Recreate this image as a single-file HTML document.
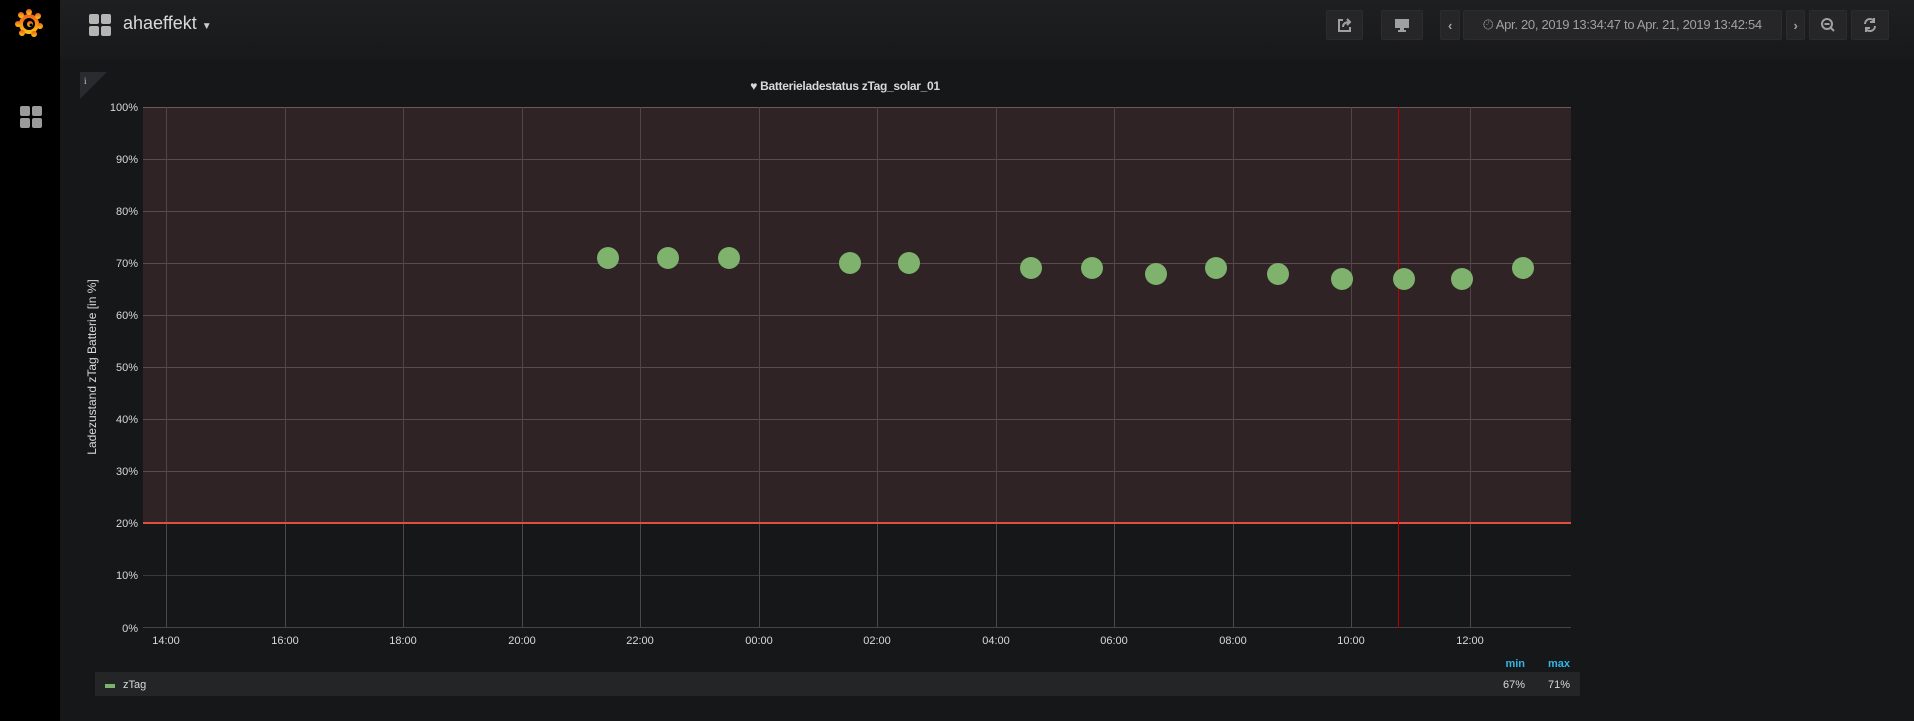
<!DOCTYPE html>
<html><head><meta charset="utf-8"><style>
body{margin:0;width:1914px;height:721px;overflow:hidden;background:#161719;font-family:"Liberation Sans",sans-serif;position:relative}
.side{position:absolute;left:0;top:0;width:60px;height:721px;background:#000}
.top{position:absolute;left:60px;top:0;right:0;height:60px;background:linear-gradient(#1e1f21,#18191b)}
.btn{position:absolute;top:10px;height:30px;background:#262628;border:1px solid #2c2c2e;box-sizing:border-box;border-radius:2px;color:#9fa0a2;font-size:13px;display:flex;align-items:center;justify-content:center;letter-spacing:-0.3px}
</style></head><body>
<div class="side">
<svg width="60" height="50" style="position:absolute;left:0;top:0"><defs><linearGradient id="g" x1="0" y1="1" x2="0" y2="0"><stop offset="0" stop-color="#fbca0a"/><stop offset="1" stop-color="#f05a28"/></linearGradient></defs>
<g fill="url(#g)"><circle cx="29" cy="24" r="10"/><circle cx="29" cy="12" r="3"/><circle cx="38" cy="16" r="3"/><circle cx="40" cy="26" r="3"/><circle cx="34" cy="34" r="3"/><circle cx="22" cy="33" r="3"/><circle cx="18" cy="24" r="3"/><circle cx="21" cy="15" r="3"/></g>
<circle cx="29" cy="24" r="6" fill="#000"/><circle cx="30" cy="24" r="3" fill="url(#g)"/><circle cx="31" cy="25" r="1.5" fill="#000"/></svg>
<div style="position:absolute;left:20px;top:106px;width:22px;height:22px">
<div style="position:absolute;left:0;top:0;width:10px;height:10px;background:#9b9b9b;border-radius:2px"></div>
<div style="position:absolute;left:12px;top:0;width:10px;height:10px;background:#9b9b9b;border-radius:2px"></div>
<div style="position:absolute;left:0;top:12px;width:10px;height:10px;background:#9b9b9b;border-radius:2px"></div>
<div style="position:absolute;left:12px;top:12px;width:10px;height:10px;background:#9b9b9b;border-radius:2px"></div></div>
</div>
<div class="top"></div>
<div style="position:absolute;left:89px;top:14px;width:22px;height:22px">
<div style="position:absolute;left:0;top:0;width:10px;height:10px;background:#b5b5b5;border-radius:2px"></div>
<div style="position:absolute;left:12px;top:0;width:10px;height:10px;background:#b5b5b5;border-radius:2px"></div>
<div style="position:absolute;left:0;top:12px;width:10px;height:10px;background:#b5b5b5;border-radius:2px"></div>
<div style="position:absolute;left:12px;top:12px;width:10px;height:10px;background:#b5b5b5;border-radius:2px"></div></div>
<div style="position:absolute;left:123px;top:13px;color:#d8d9da;font-size:18px">ahaeffekt <span style="font-size:10px;color:#ccc">▼</span></div>
<div class="btn" style="left:1326px;width:37px"><svg width="16" height="16" viewBox="0 0 16 16" fill="none" stroke="#9fa0a2" stroke-width="2"><path d="M6 3H2v11h11v-4"/><path d="M6 10c0-4 3-5 7-5M10 2l3 3-3 3"/></svg></div>
<div class="btn" style="left:1381px;width:42px"><svg width="18" height="16"><rect x="2" y="2" width="14" height="9" fill="#9fa0a2"/><rect x="7" y="11" width="4" height="3" fill="#9fa0a2"/><rect x="5" y="13" width="8" height="2" fill="#9fa0a2"/></svg></div>
<div class="btn" style="left:1440px;width:20px;font-weight:bold">‹</div>
<div class="btn" style="left:1463px;width:319px">🕘&#xFE0E; Apr. 20, 2019 13:34:47 to Apr. 21, 2019 13:42:54</div>
<div class="btn" style="left:1786px;width:19px;font-weight:bold">›</div>
<div class="btn" style="left:1809px;width:38px"><svg width="16" height="16" fill="none" stroke="#9fa0a2" stroke-width="2"><circle cx="7" cy="7" r="5"/><path d="M4.5 7h5M11 11l3 3"/></svg></div>
<div class="btn" style="left:1851px;width:38px"><svg width="16" height="16" fill="none" stroke="#9fa0a2" stroke-width="2"><path d="M3 7a5 5 0 0 1 9-3M13 9a5 5 0 0 1-9 3"/><path d="M12 1v4h-4M4 15v-4h4"/></svg></div>
<svg width="27" height="27" style="position:absolute;left:80px;top:72px"><path d="M0 0H27L0 27Z" fill="#2a2b2e"/><text x="4" y="12" fill="#ccc" font-size="9" font-family="Liberation Serif">i</text></svg>
<div style="position:absolute;left:0;width:1690px;top:79px;text-align:center;color:#d8d9da;font-size:12px;font-weight:bold;letter-spacing:-0.3px">♥ Batterieladestatus zTag_solar_01</div>
<svg width="1914" height="721" style="position:absolute;left:0;top:0">
<rect x="143" y="107" width="1428" height="416" fill="#2f2325"/>
<g stroke-width="1">
<line x1="143" x2="1571" y1="107.5" y2="107.5" stroke="#6a5a5c"/>
<line x1="143" x2="1571" y1="159.5" y2="159.5" stroke="#5a4c4e"/>
<line x1="143" x2="1571" y1="211.5" y2="211.5" stroke="#5a4c4e"/>
<line x1="143" x2="1571" y1="263.5" y2="263.5" stroke="#5a4c4e"/>
<line x1="143" x2="1571" y1="315.5" y2="315.5" stroke="#5a4c4e"/>
<line x1="143" x2="1571" y1="367.5" y2="367.5" stroke="#5a4c4e"/>
<line x1="143" x2="1571" y1="419.5" y2="419.5" stroke="#5a4c4e"/>
<line x1="143" x2="1571" y1="471.5" y2="471.5" stroke="#5a4c4e"/>
<line x1="143" x2="1571" y1="575.5" y2="575.5" stroke="#3a3a3c"/>
<line x1="143" x2="1571" y1="627.5" y2="627.5" stroke="#444"/>
</g>
<g stroke="#4f4648" stroke-width="1">
<line x1="166.5" x2="166.5" y1="107" y2="628"/><line x1="285.5" x2="285.5" y1="107" y2="628"/><line x1="403.5" x2="403.5" y1="107" y2="628"/><line x1="522.5" x2="522.5" y1="107" y2="628"/><line x1="640.5" x2="640.5" y1="107" y2="628"/><line x1="759.5" x2="759.5" y1="107" y2="628"/><line x1="877.5" x2="877.5" y1="107" y2="628"/><line x1="996.5" x2="996.5" y1="107" y2="628"/><line x1="1114.5" x2="1114.5" y1="107" y2="628"/><line x1="1233.5" x2="1233.5" y1="107" y2="628"/><line x1="1351.5" x2="1351.5" y1="107" y2="628"/><line x1="1470.5" x2="1470.5" y1="107" y2="628"/>
</g>
<rect x="143" y="522" width="1428" height="2" fill="#e24d42"/>
<line x1="1398.5" x2="1398.5" y1="107" y2="628" stroke="#b00" stroke-width="1"/>
<g fill="#7eb26d">
<circle cx="608" cy="258" r="11"/><circle cx="668" cy="258" r="11"/><circle cx="729" cy="258" r="11"/><circle cx="850" cy="263" r="11"/><circle cx="909" cy="263" r="11"/><circle cx="1031" cy="268" r="11"/><circle cx="1092" cy="268" r="11"/><circle cx="1156" cy="274" r="11"/><circle cx="1216" cy="268" r="11"/><circle cx="1278" cy="274" r="11"/><circle cx="1342" cy="279" r="11"/><circle cx="1404" cy="279" r="11"/><circle cx="1462" cy="279" r="11"/><circle cx="1523" cy="268" r="11"/>
</g>
<g fill="#d8d9da" font-size="11" font-family="Liberation Sans" text-anchor="end">
<text x="138" y="111">100%</text><text x="138" y="163">90%</text><text x="138" y="215">80%</text><text x="138" y="267">70%</text><text x="138" y="319">60%</text><text x="138" y="371">50%</text><text x="138" y="423">40%</text><text x="138" y="475">30%</text><text x="138" y="527">20%</text><text x="138" y="579">10%</text><text x="138" y="632">0%</text>
</g>
<g fill="#d8d9da" font-size="11" font-family="Liberation Sans" text-anchor="middle">
<text x="166" y="644">14:00</text><text x="285" y="644">16:00</text><text x="403" y="644">18:00</text><text x="522" y="644">20:00</text><text x="640" y="644">22:00</text><text x="759" y="644">00:00</text><text x="877" y="644">02:00</text><text x="996" y="644">04:00</text><text x="1114" y="644">06:00</text><text x="1233" y="644">08:00</text><text x="1351" y="644">10:00</text><text x="1470" y="644">12:00</text>
</g>
<text transform="translate(96,367) rotate(-90)" fill="#d8d9da" font-size="12" text-anchor="middle" font-family="Liberation Sans">Ladezustand zTag Batterie [in %]</text>
<rect x="95" y="672" width="1485" height="24" fill="#242527"/>
<rect x="105" y="684" width="10" height="4" fill="#7eb26d"/>
<text x="123" y="688" fill="#d8d9da" font-size="11" font-family="Liberation Sans">zTag</text>
<g font-size="11" font-family="Liberation Sans" text-anchor="end">
<text x="1525" y="667" fill="#33b5e5" font-weight="bold">min</text><text x="1570" y="667" fill="#33b5e5" font-weight="bold">max</text>
<text x="1525" y="688" fill="#d8d9da">67%</text><text x="1570" y="688" fill="#d8d9da">71%</text>
</g>
</svg>
</body></html>
